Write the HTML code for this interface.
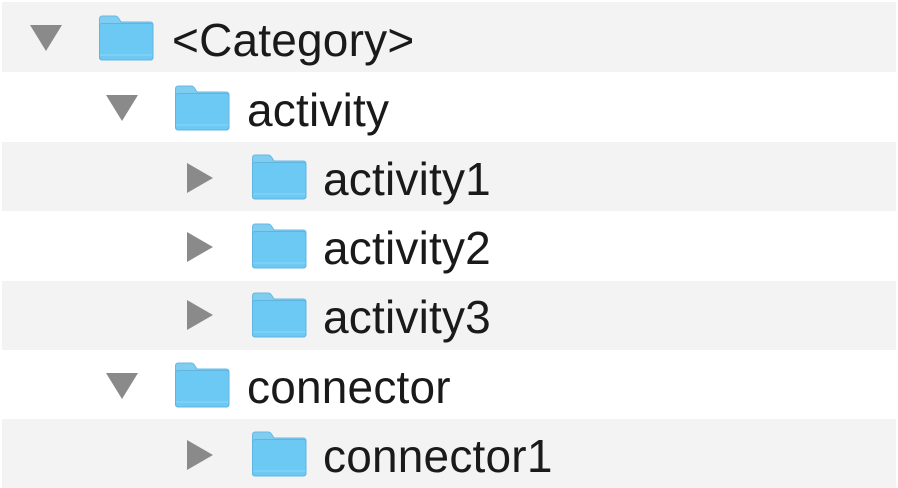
<!DOCTYPE html>
<html><head><style>
body{margin:0;width:898px;height:488px;background:#fff;overflow:hidden;font-family:"Liberation Sans",sans-serif;}
.row{position:absolute;left:2px;width:894px;height:70px;}
.g{background:#f3f3f3;}
.tri{position:absolute;}
.f{position:absolute;width:56px;height:46px;}
.t{position:absolute;font-size:46px;color:#1a1a1a;line-height:1;letter-spacing:0.2px;}
</style></head><body>
<svg width="0" height="0" style="position:absolute"><defs>
<symbol id="fold" viewBox="0 0 56 46">
<path d="M1.5 4 Q1.5 1 4.5 1 H17 Q19 1 20.5 3 L23 7 H52 Q55 7 55 10 V42 Q55 45 52 45 H4.5 Q1.5 45 1.5 42 Z" fill="#7fcdf1" stroke="#6ab8e2" stroke-width="1"/>
<path d="M1.5 11 Q1.5 8.5 4.5 8.5 H52 Q55 8.5 55 11 V42 Q55 45 52 45 H4.5 Q1.5 45 1.5 42 Z" fill="#6cc9f4" stroke="#5fb4e0" stroke-width="1"/>
<line x1="2" y1="40" x2="54.5" y2="40" stroke="#8fd5f5" stroke-width="1"/>
</symbol>
<symbol id="down" viewBox="0 0 32 26"><path d="M0 0 H32 L16 26 Z" fill="#8a8a8a"/></symbol>
<symbol id="right" viewBox="0 0 26 30"><path d="M0 0 L26 15 L0 30 Z" fill="#8a8a8a"/></symbol>
</defs></svg>

<div class="row g" style="top:2px;height:70px"></div>
<div class="row g" style="top:142px;height:69px"></div>
<div class="row g" style="top:281px;height:69px"></div>
<div class="row g" style="top:419px;height:69px"></div>

<svg class="tri" style="left:30px;top:25px" width="32" height="26"><use href="#down"/></svg>
<svg class="f" style="left:98px;top:15px"><use href="#fold"/></svg>
<div class="t" style="left:172px;top:17px">&lt;Category&gt;</div>

<svg class="tri" style="left:106px;top:95px" width="32" height="26"><use href="#down"/></svg>
<svg class="f" style="left:174px;top:85px"><use href="#fold"/></svg>
<div class="t" style="left:247px;top:87px">activity</div>

<svg class="tri" style="left:187px;top:163px" width="26" height="30"><use href="#right"/></svg>
<svg class="f" style="left:251px;top:154px"><use href="#fold"/></svg>
<div class="t" style="left:323px;top:156px">activity1</div>

<svg class="tri" style="left:187px;top:232px" width="26" height="30"><use href="#right"/></svg>
<svg class="f" style="left:251px;top:223px"><use href="#fold"/></svg>
<div class="t" style="left:323px;top:225px">activity2</div>

<svg class="tri" style="left:187px;top:300px" width="26" height="30"><use href="#right"/></svg>
<svg class="f" style="left:251px;top:292px"><use href="#fold"/></svg>
<div class="t" style="left:323px;top:294px">activity3</div>

<svg class="tri" style="left:106px;top:373px" width="32" height="26"><use href="#down"/></svg>
<svg class="f" style="left:174px;top:362px"><use href="#fold"/></svg>
<div class="t" style="left:247px;top:364px">connector</div>

<svg class="tri" style="left:187px;top:440px" width="26" height="30"><use href="#right"/></svg>
<svg class="f" style="left:251px;top:431px"><use href="#fold"/></svg>
<div class="t" style="left:323px;top:433px">connector1</div>
</body></html>
